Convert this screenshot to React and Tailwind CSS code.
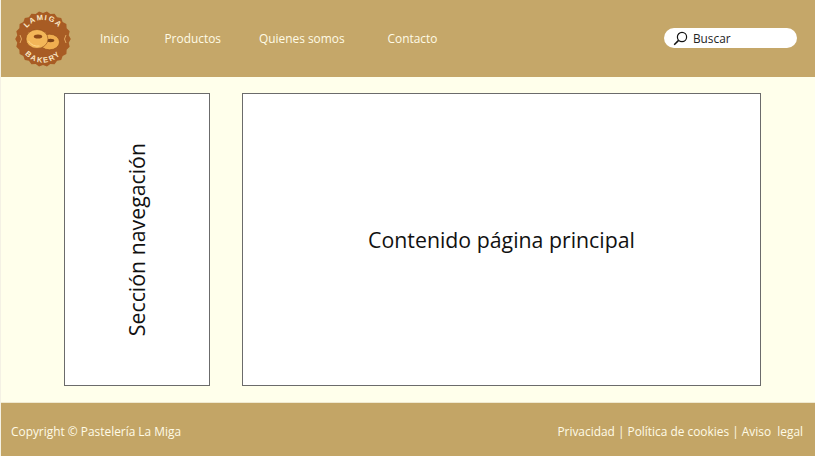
const FONT = "font-['Open_Sans',sans-serif]";

function Logo() {
  const points = [];
  const n = 22;
  for (let i = 0; i < n * 2; i++) {
    const a = (i * Math.PI) / n;
    const r = i % 2 === 0 ? 27.8 : 26;
    points.push(`${(28 + r * Math.cos(a)).toFixed(2)},${(28 + r * Math.sin(a)).toFixed(2)}`);
  }
  return (
    <svg width="56" height="56" viewBox="0 0 56 56" className="shrink-0">
      <polygon points={points.join(" ")} fill="#a85c24" />
      <defs>
        <path id="logoTop" d="M 8 29 A 20 20 0 0 1 48 29" />
        <path id="logoBottom" d="M 4.5 28 A 23.5 23.5 0 0 0 51.5 28" />
      </defs>
      <text fill="#fbe9c8" fontSize="7.5" fontWeight="700" fontFamily="Liberation Sans, sans-serif" letterSpacing="1.3">
        <textPath href="#logoTop" startOffset="50%" textAnchor="middle">LAMIGA</textPath>
      </text>
      <text fill="#fbe9c8" fontSize="7.5" fontWeight="700" fontFamily="Liberation Sans, sans-serif" letterSpacing="1.6">
        <textPath href="#logoBottom" startOffset="50%" textAnchor="middle">BAKERY</textPath>
      </text>
      <ellipse cx="34.5" cy="31" rx="10" ry="7.8" fill="#f0ae50" stroke="#8e4a18" strokeWidth="0.6" />
      <ellipse cx="35.5" cy="29.5" rx="3.8" ry="1.7" fill="#7a4016" />
      <ellipse cx="22" cy="28" rx="11" ry="9.5" fill="#f3b658" stroke="#8e4a18" strokeWidth="0.6" />
      <ellipse cx="23" cy="25.5" rx="4.2" ry="2.1" fill="#8e4a18" />
      <path d="M13.5 30 q4 6 11 5" stroke="#ffd68a" strokeWidth="1" fill="none" />
      <path d="M5 24 l1.5 4 l-1.5 4 M51 24 l-1.5 4 l1.5 4" stroke="#e2a860" strokeWidth="1" fill="none" />
    </svg>
  );
}

const navItems = [
  { label: "Inicio", cls: "ml-[29px]" },
  { label: "Productos", cls: "ml-[35px]" },
  { label: "Quienes somos", cls: "ml-[38px]" },
  { label: "Contacto", cls: "ml-[43px]" },
];

export default function App() {
  return (
    <div className={`${FONT} w-[815px] h-[456px] flex flex-col overflow-hidden bg-[#ffffeb] border-l border-[#f4f1e4]`}>
      <header className="h-[77px] shrink-0 bg-[#c5a769] flex items-center pl-[14px] pr-[18px]">
        <Logo />
        <nav className="flex items-center text-[11.9px] text-[#fffbe6] mt-[1px]">
          {navItems.map((item) => (
            <a key={item.label} className={item.cls}>{item.label}</a>
          ))}
        </nav>
        <div className="ml-auto mt-[-1px] w-[133px] h-[20px] rounded-full bg-white flex items-center pl-[9px] gap-[5px]">
          <svg width="15" height="15" viewBox="0 0 15 15" fill="none" stroke="#111" strokeWidth="1.2" className="shrink-0">
            <circle cx="9" cy="6" r="4.6" />
            <path d="M5.6 9.4 L1.2 13.8" strokeWidth="1.5" />
          </svg>
          <span className="text-[11.8px] text-[#222] leading-none mt-[1px]">Buscar</span>
        </div>
      </header>
      <main className="flex-1 flex pt-[16px] pb-[16px] pl-[63px] gap-[32px]">
        <section className="w-[146px] h-full bg-white border border-[#6b6b6b] flex items-center justify-center">
          <span className="[writing-mode:vertical-rl] rotate-180 text-[21.3px] text-[#111] whitespace-nowrap">Sección navegación</span>
        </section>
        <section className="w-[519px] h-full bg-white border border-[#6b6b6b] flex items-center justify-center">
          <span className="text-[21.3px] text-[#111] whitespace-nowrap">Contenido página principal</span>
        </section>
      </main>
      <footer className="h-[54px] shrink-0 bg-[#c3a566] flex items-center justify-between pl-[10px] pr-[12px] pt-[5px] text-[11.9px] text-[#fffbe6] border-t border-[#efe9cf]">
        <span>Copyright © Pastelería La Miga</span>
        <span className="whitespace-pre">Privacidad | Política de cookies | Aviso  legal</span>
      </footer>
    </div>
  );
}
